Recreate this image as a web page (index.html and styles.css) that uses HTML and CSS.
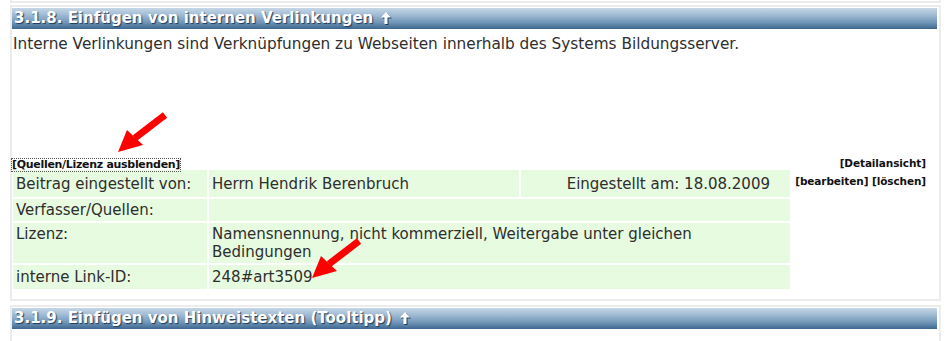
FILE: index.html
```html
<!DOCTYPE html>
<html>
<head>
<meta charset="utf-8">
<link rel="stylesheet" href="styles.css">
</head>
<body>
<div class="prev"></div>
<div class="panel">
  <div class="head">3.1.8. Einfügen von internen Verlinkungen <svg class="up" width="10" height="12" viewBox="0 0 10 12"><polygon points="5,0 10,5.5 6.5,5.5 6.5,12 3.5,12 3.5,5.5 0,5.5" fill="#fff"/></svg></div>
  <p class="intro">Interne Verlinkungen sind Verknüpfungen zu Webseiten innerhalb des Systems Bildungsserver.</p>
  <div class="meta">
    <div class="meta-main">
      <div class="toggle-row"><span class="toggle">[Quellen/Lizenz ausblenden]</span></div>
      <table class="info">
        <tr class="r1"><td class="c1">Beitrag eingestellt von:</td><td class="c2">Herrn Hendrik Berenbruch</td><td class="c3">Eingestellt am: 18.08.2009</td></tr>
        <tr class="r2"><td class="c1">Verfasser/Quellen:</td><td colspan="2"></td></tr>
        <tr class="r3"><td class="c1">Lizenz:</td><td colspan="2">Namensnennung, nicht kommerziell, Weitergabe unter gleichen<br>Bedingungen</td></tr>
        <tr class="r4"><td class="c1">interne Link-ID:</td><td colspan="2">248#art3509</td></tr>
      </table>
    </div>
    <div class="actions">
      <div>[Detailansicht]</div>
      <div>[bearbeiten] [löschen]</div>
    </div>
  </div>
  <svg class="arrow a1" width="60" height="50" viewBox="0 0 60 50"><line x1="50" y1="5" x2="20" y2="28" stroke="#f00" stroke-width="7"/><polygon points="3,42 12,20 28,35" fill="#f00"/></svg>
  <svg class="arrow a2" width="60" height="50" viewBox="0 0 60 50"><line x1="50" y1="5" x2="20" y2="28" stroke="#f00" stroke-width="7"/><polygon points="3,42 12,20 28,35" fill="#f00"/></svg>
</div>
<div class="panel panel2">
  <div class="head">3.1.9. Einfügen von Hinweistexten (Tooltipp) <svg class="up" width="10" height="12" viewBox="0 0 10 12"><polygon points="5,0 10,5.5 6.5,5.5 6.5,12 3.5,12 3.5,5.5 0,5.5" fill="#fff"/></svg></div>
</div>
</body>
</html>
```
FILE: styles.css
```css
html, body { margin: 0; padding: 0; background: #fff; }
body { font-family: "DejaVu Sans", Verdana, sans-serif; color: #2e2e2e; }
.prev { margin: 0 6px 0 10px; height: 1px; border: 2px solid #ececec; border-top: 0; }
.panel { position: relative; margin: 2px 6px 0 10px; border: 2px solid #ececec; padding: 1px 2px 0 0; height: 296px; box-sizing: border-box; }
.panel2 { margin-top: 4px; height: 36px; border-bottom: 0; }
.head { height: 21px; line-height: 21px; padding-left: 2px; color: #fff; font-weight: bold; font-size: 15px;
  background: linear-gradient(#c6d7e7 0%, #9db9d2 35%, #6f94b6 70%, #3d678f 100%);
  text-shadow: 1px 1px 1px #1d3a58; white-space: nowrap; }
.up { vertical-align: -1px; margin-left: 3px; filter: drop-shadow(1px 1px 0 #1d3a58); }
.intro { margin: 7px 0 0 1px; font-size: 15.3px; line-height: 17px; height: 117px; white-space: nowrap; }
.meta { display: flex; }
.meta-main { width: 781px; }
.toggle-row { height: 15px; }
.toggle { display: inline-block; font-size: 11px; font-weight: bold; line-height: 12px; color: #111; outline: 1px dotted #555; letter-spacing: -0.3px; }
.info { border-collapse: separate; border-spacing: 2px; margin-left: -1px; width: 781px; font-size: 15px; line-height: 18px; }
.info td { background: #e6fbdf; padding: 0 3px; vertical-align: middle; white-space: nowrap; }
.info .c1 { width: 188px; }
.info .c2 { width: 304px; }
.info .c3 { text-align: right; padding-right: 20px; }
.r1 td { height: 27px; }
.r2 td { height: 22px; }
.r3 td { height: 38px; vertical-align: top; padding-top: 2px; }
.r4 td { height: 24px; }
.actions { flex: 1; text-align: right; padding-right: 11px; font-size: 10.5px; font-weight: bold; color: #111; line-height: 18px; margin-top: 1px; letter-spacing: -0.1px; white-space: nowrap; }
.arrow { position: absolute; }
.a1 { left: 103px; top: 103px; }
.a2 { left: 297px; top: 229px; }
```
